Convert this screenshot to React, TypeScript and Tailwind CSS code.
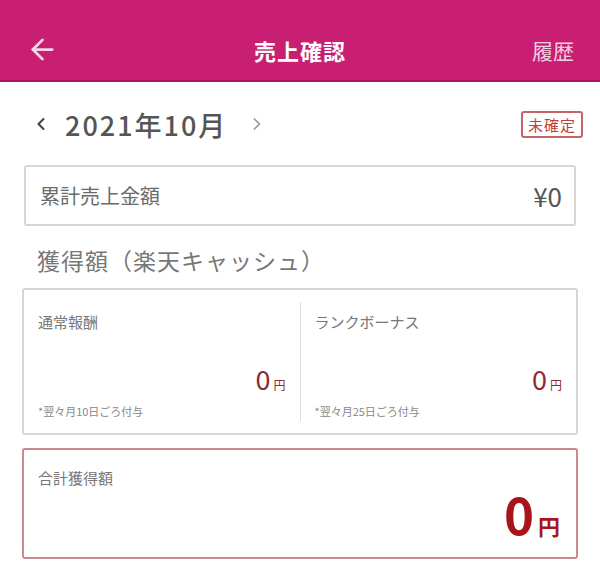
import { ArrowLeft, ChevronLeft, ChevronRight } from 'lucide-react';

const font = { fontFamily: '"Noto Sans CJK JP", "Noto Sans", sans-serif' };

function Reward({ label, note }: { label: string; note: string }) {
  return (
    <div className="flex-1 flex flex-col px-[14px] pt-[12px] pb-[14px]">
      <div className="text-[15px] leading-none text-[#777]">{label}</div>
      <div className="mt-[36px] flex items-baseline justify-end text-[#8e2a33]">
        <span className="text-[27px] leading-none">0</span>
        <span className="text-[12px] ml-[3px]">円</span>
      </div>
      <div className="mt-[12px] text-[11px] leading-none text-[#888]">{note}</div>
    </div>
  );
}

export default function App() {
  return (
    <div className="w-[600px] h-[570px] bg-white overflow-hidden" style={font}>
      {/* ヘッダー */}
      <div className="h-[82px] bg-[#c81f73] border-b-2 border-[#a3175c] flex items-end pb-[14px] px-[26px] relative">
        <ArrowLeft className="w-[33px] h-[33px] text-[#f6d5e6]" strokeWidth={2} />
        <div className="absolute left-0 right-0 bottom-[19px] text-center text-white text-[22px] tracking-[1px] font-bold leading-none">
          売上確認
        </div>
        <div className="ml-auto text-[21px] leading-none text-[#f3cfe1] mb-[5px]">履歴</div>
      </div>

      {/* 月選択 */}
      <div className="flex items-center px-[31px] mt-[27px] h-[30px]">
        <ChevronLeft className="w-[20px] h-[20px] text-[#444]" strokeWidth={2.5} />
        <span className="ml-[14px] text-[27px] tracking-[2px] leading-none text-[#555] font-medium">2021年10月</span>
        <ChevronRight className="ml-[20px] w-[20px] h-[20px] text-[#999]" strokeWidth={2} />
        <span className="ml-auto mr-[-14px] border-2 border-[#c56464] rounded-[3px] px-[5px] py-[4px] text-[15px] tracking-[1px] leading-none text-[#c23c3c]">
          未確定
        </span>
      </div>

      {/* 累計売上金額 */}
      <div className="mx-[24px] mt-[26px] h-[61px] border-2 border-[#d6d6d6] rounded-[3px] flex items-center justify-between pl-[14px] pr-[12px]">
        <span className="text-[20px] text-[#6a6a6a]">累計売上金額</span>
        <span className="text-[26px] text-[#555]">¥0</span>
      </div>

      {/* 獲得額 */}
      <div className="px-[37px] mt-[23px] text-[23px] tracking-[1px] leading-none text-[#777]">獲得額（楽天キャッシュ）</div>

      <div className="mx-[22px] mt-[16px] h-[147px] border-2 border-[#d6d6d6] rounded-[3px] flex py-[12px]">
        <Reward label="通常報酬" note="*翌々月10日ごろ付与" />
        <div className="w-px bg-[#ddd]" />
        <Reward label="ランクボーナス" note="*翌々月25日ごろ付与" />
      </div>

      {/* 合計獲得額 */}
      <div className="mx-[22px] mt-[13px] h-[111px] border-2 border-[#c88a8f] rounded-[3px] flex flex-col px-[14px] pt-[20px]">
        <div className="text-[15px] leading-none text-[#777]">合計獲得額</div>
        <div className="mt-[3px] flex items-baseline justify-end pr-[2px] text-[#a8141c]">
          <span className="text-[51px] font-bold leading-none">0</span>
          <span className="text-[22px] font-bold ml-[4px]">円</span>
        </div>
      </div>
    </div>
  );
}
